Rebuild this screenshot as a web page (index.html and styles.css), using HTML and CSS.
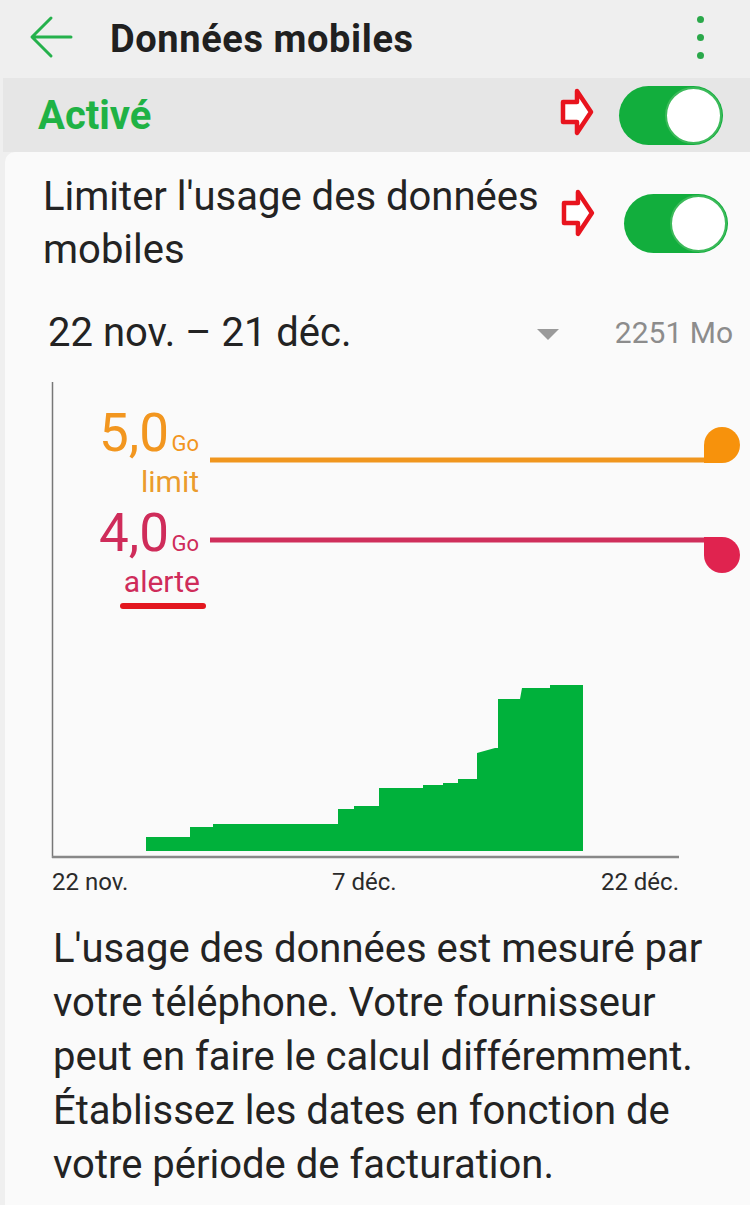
FILE: index.html
```html
<!DOCTYPE html>
<html lang="fr">
<head>
    <meta charset="UTF-8">
    <meta name="viewport" content="width=device-width, initial-scale=1.0">
    <title>Données mobiles</title>
    <link rel="stylesheet" href="styles.css">
</head>
<body>
    <header class="topbar">
        <svg class="back" width="44" height="44" viewBox="0 0 44 44">
            <path d="M42 22 H4 M22 3 L3 22 L22 41" fill="none" stroke="#25b14c" stroke-width="3" stroke-linecap="round" stroke-linejoin="round"/>
        </svg>
        <h1 class="title">Données mobiles</h1>
        <div class="kebab"><span></span><span></span><span></span></div>
    </header>

    <div class="row active-row">
        <span class="active-label">Activé</span>
        <svg class="pointer" width="34" height="48" viewBox="0 0 34 48">
            <polygon points="3,14 17,14 17,3 31,24 17,45 17,34 3,34" fill="#fff" stroke="#e8141e" stroke-width="4.5" stroke-linejoin="round"/>
        </svg>
        <span class="toggle"></span>
    </div>

    <main class="card">
        <div class="row limit-row">
            <span class="limit-label">Limiter l'usage des données mobiles</span>
            <svg class="pointer" width="34" height="48" viewBox="0 0 34 48">
                <polygon points="3,14 17,14 17,3 31,24 17,45 17,34 3,34" fill="#fff" stroke="#e8141e" stroke-width="4.5" stroke-linejoin="round"/>
            </svg>
            <span class="toggle"></span>
        </div>

        <div class="period">
            <span class="period-range">22 nov. – 21 déc.</span>
            <span class="caret"></span>
            <span class="period-total">2251 Mo</span>
        </div>

        <svg class="chart" width="745" height="530" viewBox="5 370 745 530">
            <line x1="52.5" y1="382" x2="52.5" y2="858" stroke="#777" stroke-width="1.5"/>

            <polygon fill="#00b13b" points="146,851 146,837 190,837 190,827 213,827 213,824 338,824 338,809 354,809 354,806 379,806 379,788 423,788 423,785 443,785 443,783 458,783 458,779 477,779 477,753 495,748 498,748 498,699 520,699 522,688 550,688 550,685 583,685 583,851"/>

            <line x1="52" y1="857" x2="679" y2="857" stroke="#888" stroke-width="2.5"/>

            <line x1="210" y1="460" x2="712" y2="460" stroke="#f0961e" stroke-width="5"/>
            <circle cx="722" cy="445" r="18" fill="#f7920c"/>
            <rect x="704" y="445" width="18" height="18" fill="#f7920c"/>

            <line x1="210" y1="540" x2="712" y2="540" stroke="#cf2f5b" stroke-width="5"/>
            <circle cx="722" cy="555" r="18" fill="#e0234f"/>
            <rect x="704" y="537" width="18" height="18" fill="#e0234f"/>

            <text class="big orange" x="169" y="451" text-anchor="end">5,0</text>
            <text class="unit orange" x="199" y="451" text-anchor="end">Go</text>
            <text class="tag orange-soft" x="199" y="492" text-anchor="end">limit</text>

            <text class="big red" x="169" y="551" text-anchor="end">4,0</text>
            <text class="unit red" x="199" y="551" text-anchor="end">Go</text>
            <text class="tag red" x="200" y="592" text-anchor="end">alerte</text>
            <line x1="123" y1="606" x2="203" y2="606" stroke="#e3171f" stroke-width="6" stroke-linecap="round"/>

            <text class="axis" x="52" y="890">22 nov.</text>
            <text class="axis" x="332" y="890">7 déc.</text>
            <text class="axis" x="679" y="890" text-anchor="end">22 déc.</text>
        </svg>

        <p class="note">L'usage des données est mesuré par votre téléphone. Votre fournisseur peut en faire le calcul différemment. Établissez les dates en fonction de votre période de facturation.</p>
    </main>
</body>
</html>
```

FILE: styles.css
```css
body {
    margin: 0;
    background: #efefef;
    font-family: Roboto, "Liberation Sans", sans-serif;
    color: #232323;
}
.topbar {
    height: 78px;
    display: flex;
    align-items: center;
    padding-left: 29px;
}
.back {
    margin-top: -4px;
}
.title {
    margin: 0 0 0 37px;
    font-size: 38px;
    font-weight: 700;
    letter-spacing: 0.6px;
    color: #202020;
    flex: 1;
}
.kebab {
    display: flex;
    flex-direction: column;
    gap: 11px;
    margin-right: 46px;
    margin-top: -4px;
}
.kebab span {
    width: 7px;
    height: 7px;
    border-radius: 50%;
    background: #2aa84a;
}
.row {
    display: flex;
    align-items: center;
}
.active-row {
    height: 74px;
    margin-left: 3px;
    padding: 0 27px 0 35px;
    background: #e6e6e6;
}
.active-label {
    flex: 1;
    font-size: 40px;
    font-weight: 700;
    color: #1fb245;
}
.pointer {
    margin-top: -6px;
}
.active-row .toggle {
    margin-left: 25px;
}
.toggle {
    position: relative;
    width: 104px;
    height: 59px;
    border-radius: 30px;
    background: #12ae3d;
}
.toggle::after {
    content: "";
    position: absolute;
    right: 1px;
    top: 1px;
    width: 53px;
    height: 53px;
    border-radius: 50%;
    background: #fff;
    border: 2px solid #3cba5a;
}
.card {
    margin-left: 5px;
    padding-top: 18px;
    background: #fafafa;
    border-top-left-radius: 10px;
    min-height: 1035px;
}
.limit-row {
    padding: 0 22px 0 38px;
}
.limit-label {
    width: 520px;
    font-size: 40px;
    line-height: 53px;
}
.limit-row .pointer {
    margin-top: -20px;
}
.limit-row .toggle {
    margin-left: 29px;
}
.period {
    display: flex;
    align-items: center;
    margin-top: 30px;
    padding: 0 17px 0 43px;
    height: 53px;
}
.period-range {
    flex: 1;
    font-size: 40px;
}
.caret {
    width: 0;
    height: 0;
    border-left: 11px solid transparent;
    border-right: 11px solid transparent;
    border-top: 11px solid #9a9a9a;
    margin-right: 56px;
    margin-top: 4px;
}
.period-total {
    font-size: 30px;
    color: #8c8c8c;
}
.chart {
    display: block;
    margin-top: 11px;
}
.chart text {
    font-family: Roboto, "Liberation Sans", sans-serif;
}
.big {
    font-size: 53px;
}
.unit {
    font-size: 22px;
}
.tag {
    font-size: 30px;
}
.axis {
    font-size: 24px;
    fill: #2a2a2a;
}
.orange {
    fill: #f2961f;
}
.orange-soft {
    fill: #eb9c2c;
}
.red {
    fill: #cf2c5a;
}
.note {
    margin: 22px 0 0;
    padding: 0 12px 0 48px;
    max-width: 680px;
    font-size: 40px;
    line-height: 54px;
    color: #232323;
}
```
